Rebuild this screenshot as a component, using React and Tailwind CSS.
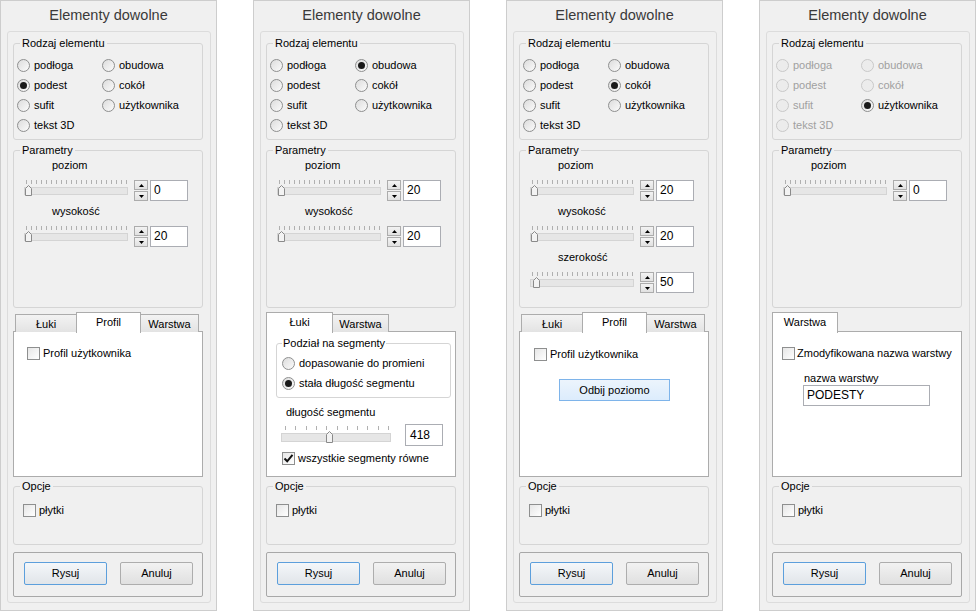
import React from 'react';

const RADIO_LABELS = ['podłoga', 'obudowa', 'podest', 'cokół', 'sufit', 'użytkownika', 'tekst 3D'];

function Radio({ checked, disabled, label }) {
  return (
    <div className="flex items-center h-[20px] gap-[4px] whitespace-nowrap">
      <span
        className={
          disabled
            ? 'w-[13px] h-[13px] shrink-0 rounded-full border border-[#c9c9c9] bg-[#ececec] flex items-center justify-center'
            : 'w-[13px] h-[13px] shrink-0 rounded-full border border-[#8e8f8f] bg-gradient-to-br from-[#dcdcdc] to-[#fbfbfb] flex items-center justify-center'
        }
      >
        {checked && <span className="w-[7px] h-[7px] rounded-full bg-[#1a1a1a]" />}
      </span>
      <span className={disabled ? 'text-[#a0a0a0]' : 'text-black'}>{label}</span>
    </div>
  );
}

function Checkbox({ checked, label, gap }) {
  return (
    <div className={`flex items-center h-[13px] whitespace-nowrap ${gap === 2 ? 'gap-[2px]' : 'gap-[3px]'}`}>
      <span className="w-[13px] h-[13px] shrink-0 border border-[#8e8f8f] bg-gradient-to-br from-[#e6e6e6] to-[#ffffff] flex items-center justify-center">
        {checked && (
          <svg width="11" height="11" viewBox="0 0 11 11" className="block">
            <path d="M1.5 5.5 L4.2 8.3 L9.5 1.8" fill="none" stroke="#111" strokeWidth="2" />
          </svg>
        )}
      </span>
      <span className="leading-[13px]">{label}</span>
    </div>
  );
}

function Slider({ width, ticks, tickStart, tickEnd, thumb, trackH }) {
  const step = (tickEnd - tickStart) / (ticks - 1);
  const th = trackH || 7;
  return (
    <svg width={width} height={19} className="block shrink-0">
      {Array.from({ length: ticks }, (_, i) => {
        const x = Math.round(tickStart + i * step) + 0.5;
        return <line key={i} x1={x} x2={x} y1={1} y2={5} stroke="#b0b0b0" strokeWidth="1" />;
      })}
      <rect x={1.5} y={8.5} width={width - 3} height={th} fill="#e6e6e6" stroke="#d4d4d4" />
      <path
        d={`M${thumb + 0.5} 9.5 L${thumb + 3.5} 6.5 L${thumb + 6.5} 9.5 L${thumb + 6.5} ${8.5 + th + 1} L${thumb + 0.5} ${8.5 + th + 1} Z`}
        fill="#f3f3f3"
        stroke="#8a8a8a"
      />
    </svg>
  );
}

function Spinner() {
  return (
    <div className="flex flex-col gap-[1px] mt-[1px] shrink-0">
      <div className="w-[14px] h-[10px] border border-[#acacac] bg-gradient-to-b from-[#f3f3f3] to-[#e1e1e1] flex items-center justify-center">
        <svg width="5" height="3" className="block">
          <path d="M0 3 L2.5 0 L5 3 Z" fill="#000" />
        </svg>
      </div>
      <div className="w-[14px] h-[10px] border border-[#acacac] bg-gradient-to-b from-[#f3f3f3] to-[#e1e1e1] flex items-center justify-center">
        <svg width="5" height="3" className="block">
          <path d="M0 0 L5 0 L2.5 3 Z" fill="#000" />
        </svg>
      </div>
    </div>
  );
}

function GroupBox({ title, className, children }) {
  return (
    <fieldset className={`border border-[#d5d5d5] rounded-[3px] shrink-0 ${className}`}>
      <legend className="ml-[6px] px-[2px] leading-[14px]">{title}</legend>
      {children}
    </fieldset>
  );
}

function Param({ label, value, thumb }) {
  return (
    <div className="h-[46px]">
      <div className="h-[14px] leading-[14px] pl-[38px]">{label}</div>
      <div className="mt-[7px] flex items-start pl-[9px]">
        <Slider width={106} ticks={21} tickStart={3} tickEnd={103} thumb={thumb} />
        <div className="ml-[5px]">
          <Spinner />
        </div>
        <div className="ml-[2px] mt-[1px] w-[38px] h-[21px] border border-[#abadb3] bg-white pl-[3px] leading-[19px] text-[12px]">
          {value}
        </div>
      </div>
    </div>
  );
}

function Tabs({ tabs, selected, offset }) {
  return (
    <div className={`h-[20px] flex items-end ${offset ? 'pl-[2px]' : ''}`}>
      {tabs.map((t, i) => {
        const sel = i === selected;
        return (
          <div
            key={t.label}
            style={{ width: t.w }}
            className={
              (i > 0 ? 'ml-[-1px] ' : '') +
              (sel
                ? 'relative z-10 h-[21px] mb-[-1px] bg-white border border-b-0 border-[#acacac] flex items-start justify-center pt-[2px] leading-[14px]'
                : 'h-[18px] border border-b-0 border-[#acacac] bg-gradient-to-b from-[#f3f3f3] to-[#e3e3e3] flex items-start justify-center pt-[2px] leading-[14px]')
            }
          >
            {t.label}
          </div>
        );
      })}
    </div>
  );
}

function PaneProfil({ button }) {
  return (
    <div className={button ? 'pt-[16px] pl-[14px]' : 'pt-[15px] pl-[13px]'}>
      <Checkbox label="Profil użytkownika" />
      {button && (
        <div className="mt-[18px] ml-[25px] w-[111px] h-[22px] border border-[#7eb4ea] bg-gradient-to-b from-[#ecf4fc] to-[#dcecfc] flex items-center justify-center">
          Odbij poziomo
        </div>
      )}
    </div>
  );
}

function PaneLuki() {
  return (
    <div className="pt-[4px]">
      <fieldset className="ml-[9px] mr-[4px] h-[62px] border border-[#d5d5d5] rounded-[3px]">
        <legend className="ml-[5px] px-[1px] leading-[14px]">Podział na segmenty</legend>
        <div className="pt-[3px] pl-[5px]">
          <Radio label="dopasowanie do promieni" />
          <Radio checked label="stała długość segmentu" />
        </div>
      </fieldset>
      <div className="mt-[7px] pl-[19px] h-[14px] leading-[14px]">długość segmentu</div>
      <div className="mt-[5px] flex items-start pl-[13px]">
        <div className="mt-[1px]">
          <Slider width={112} ticks={11} tickStart={5} tickEnd={108} thumb={46} trackH={8} />
        </div>
        <div className="ml-[13px] w-[38px] h-[22px] border border-[#abadb3] bg-white pl-[4px] leading-[20px] text-[12px]">
          418
        </div>
      </div>
      <div className="mt-[6px] pl-[15px]">
        <Checkbox checked label="wszystkie segmenty równe" />
      </div>
    </div>
  );
}

function PaneWarstwa() {
  return (
    <div className="pt-[15px] pl-[9px]">
      <Checkbox label="Zmodyfikowana nazwa warstwy" gap={2} />
      <div className="mt-[11px] pl-[22px] h-[14px] leading-[14px]">nazwa warstwy</div>
      <div className="ml-[21px] w-[127px] h-[21px] border border-[#abadb3] bg-white pl-[3px] leading-[19px] text-[12px]">
        PODESTY
      </div>
    </div>
  );
}

function Panel({ cfg }) {
  return (
    <div className="w-[217px] h-[611px] border border-[#cdcdcd] bg-[#f0f0f0] flex flex-col">
      <div className="h-[30px] shrink-0 flex items-center justify-center text-[14.5px] text-[#3a3a3a]">
        Elementy dowolne
      </div>
      <div className="ml-[6px] mr-[5px] mb-[7px] flex-1 border border-[#dcdcdc] rounded-[3px] pl-[5px] pr-[7px] pt-[4px] flex flex-col">
        <GroupBox title="Rodzaj elementu" className="h-[104px]">
          <div className="pt-[5px] pl-[3px] grid grid-cols-[85px_1fr]">
            {RADIO_LABELS.map((l) => (
              <Radio
                key={l}
                label={l}
                checked={l === cfg.checked}
                disabled={cfg.disabled && l !== cfg.checked}
              />
            ))}
          </div>
        </GroupBox>
        <GroupBox title="Parametry" className="h-[165px] mt-[3px]">
          <div className="pt-[1px]">
            {cfg.params.map((p) => (
              <Param key={p[0]} label={p[0]} value={p[1]} thumb={p[2]} />
            ))}
          </div>
        </GroupBox>
        <div className="mt-[4px] shrink-0">
          <Tabs tabs={cfg.tabs} selected={cfg.sel} offset={cfg.offset} />
          <div className="mt-[-1px] h-[146px] border border-[#acacac] bg-white">
            {cfg.pane === 'profil' && <PaneProfil />}
            {cfg.pane === 'profilb' && <PaneProfil button />}
            {cfg.pane === 'luki' && <PaneLuki />}
            {cfg.pane === 'warstwa' && <PaneWarstwa />}
          </div>
        </div>
        <GroupBox title="Opcje" className="h-[66px] mt-[2px]">
          <div className="pt-[11px] pl-[9px]">
            <Checkbox label="płytki" />
          </div>
        </GroupBox>
        <div className="mt-[7px] h-[45px] shrink-0 border border-[#a8a8a8] rounded-[2px] flex items-start justify-between pl-[10px] pr-[9px] pt-[9px]">
          <button className="w-[83px] h-[23px] border border-[#5c9fdc] rounded-[2px] bg-gradient-to-b from-[#f4f7fa] to-[#e1e5e9]">
            Rysuj
          </button>
          <button className="w-[73px] h-[23px] border border-[#adadad] rounded-[2px] bg-gradient-to-b from-[#f2f2f2] to-[#e0e0e0]">
            Anuluj
          </button>
        </div>
      </div>
    </div>
  );
}

const PANELS = [
  {
    checked: 'podest',
    params: [['poziom', '0', 2], ['wysokość', '20', 2]],
    tabs: [{ label: 'Łuki', w: 62 }, { label: 'Profil', w: 65 }, { label: 'Warstwa', w: 59 }],
    sel: 1,
    offset: true,
    pane: 'profil',
  },
  {
    checked: 'obudowa',
    params: [['poziom', '20', 2], ['wysokość', '20', 2]],
    tabs: [{ label: 'Łuki', w: 67 }, { label: 'Warstwa', w: 57 }],
    sel: 0,
    offset: false,
    pane: 'luki',
  },
  {
    checked: 'cokół',
    params: [['poziom', '20', 2], ['wysokość', '20', 2], ['szerokość', '50', 4]],
    tabs: [{ label: 'Łuki', w: 62 }, { label: 'Profil', w: 65 }, { label: 'Warstwa', w: 59 }],
    sel: 1,
    offset: true,
    pane: 'profilb',
  },
  {
    checked: 'użytkownika',
    disabled: true,
    params: [['poziom', '0', 2]],
    tabs: [{ label: 'Warstwa', w: 66 }],
    sel: 0,
    offset: false,
    pane: 'warstwa',
  },
];

export default function App() {
  return (
    <div className="w-[976px] h-[611px] bg-white flex justify-between font-['Liberation_Sans',Arial,sans-serif] text-[11px] text-black overflow-hidden">
      {PANELS.map((p, i) => (
        <Panel key={i} cfg={p} />
      ))}
    </div>
  );
}
